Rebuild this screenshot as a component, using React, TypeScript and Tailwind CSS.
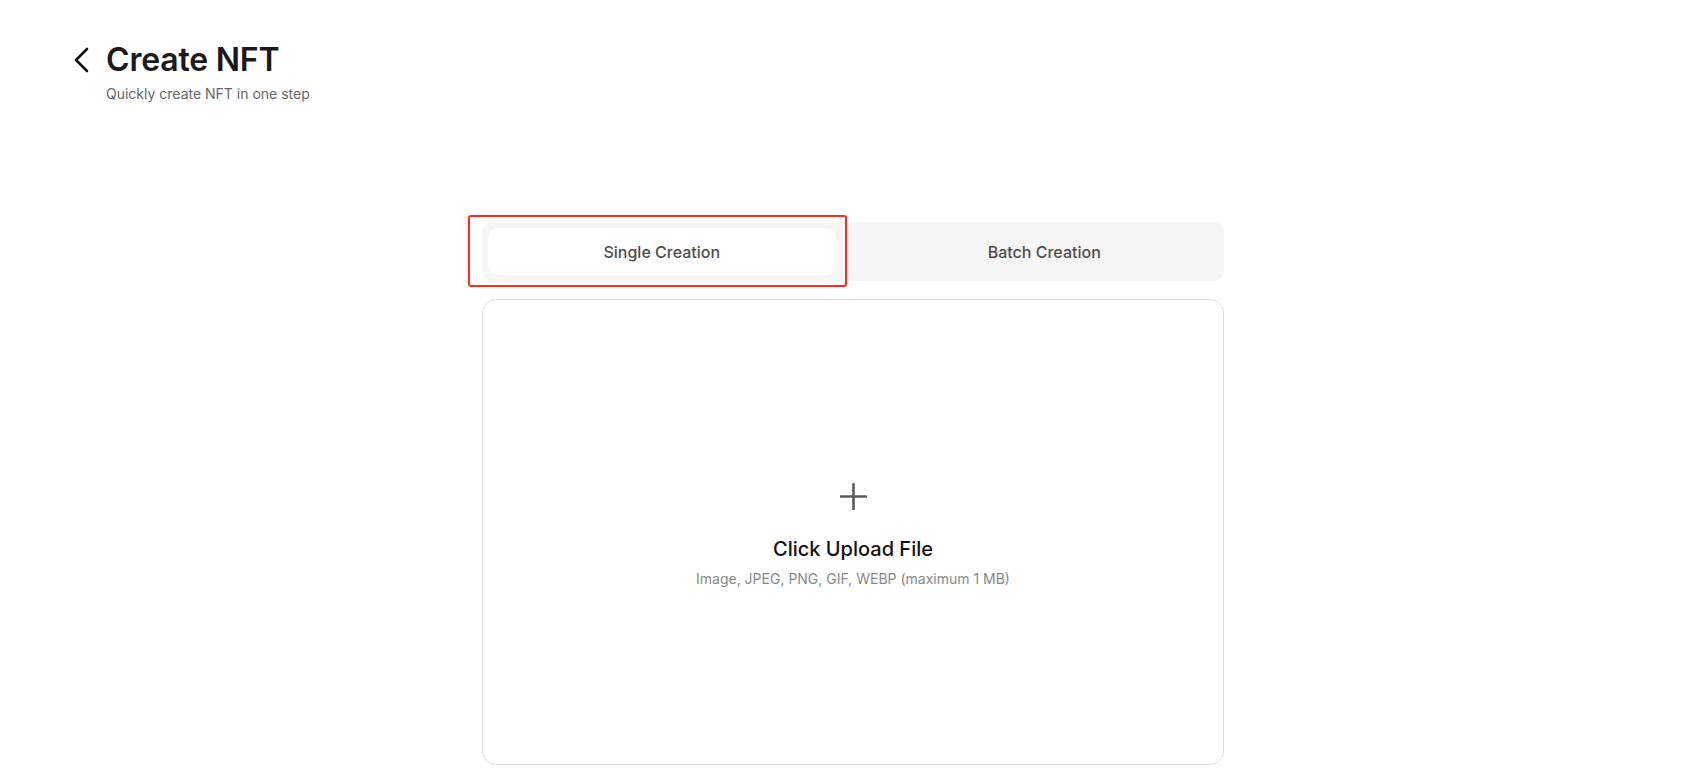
export default function App() {
  return (
    <div className="min-h-screen bg-white font-['Inter','Liberation_Sans',sans-serif] text-[#1a1a1a]">
      <div className="pl-[73px] pt-[40px]">
        <div className="flex items-center gap-[15px]">
          <svg width="18" height="28" viewBox="0 0 18 28" fill="none" className="text-[#111]">
            <polyline
              points="14,3 3,14 14,25"
              stroke="currentColor"
              strokeWidth="2.6"
              strokeLinecap="round"
              strokeLinejoin="round"
            />
          </svg>
          <h1 className="text-[32px] font-semibold leading-[40px] tracking-[-0.2px]">Create NFT</h1>
        </div>
        <p className="ml-[33px] mt-[4px] text-[14px] leading-[20px] text-[#666]">
          Quickly create NFT in one step
        </p>
      </div>

      <div className="mt-[118px] flex justify-center pl-[3px]">
        <div className="w-[742px]">
          <div className="relative">
            <div className="grid grid-cols-2 gap-[35px] rounded-[10px] bg-[#f5f5f5] p-[6px]">
              <button className="h-[47px] rounded-[10px] bg-white text-[16px] font-medium text-[#4d4d4d]">
                Single Creation
              </button>
              <button className="h-[47px] rounded-[10px] text-[16px] font-medium text-[#4d4d4d]">
                Batch Creation
              </button>
            </div>
            {/* annotation highlight */}
            <div className="pointer-events-none absolute left-[-14px] top-[-7px] h-[72px] w-[379px] rounded-[3px] border-2 border-[#ff2b1f]" />
          </div>

          <div className="mt-[18px] flex h-[466px] flex-col items-center justify-center rounded-[14px] border border-[#dedede] pt-[10px]">
            <svg width="27" height="27" viewBox="0 0 27 27" fill="none" className="-mt-[3px] text-[#5c5c5c]">
              <path d="M13.5 1v25M1 13.5h25" stroke="currentColor" strokeWidth="2.6" strokeLinecap="round" />
            </svg>
            <p className="mt-[25px] text-[20px] font-medium leading-[28px] text-[#111]">Click Upload File</p>
            <p className="mt-[6px] text-[14px] leading-[20px] text-[#888]">
              Image, JPEG, PNG, GIF, WEBP (maximum 1 MB)
            </p>
          </div>
        </div>
      </div>
    </div>
  );
}
